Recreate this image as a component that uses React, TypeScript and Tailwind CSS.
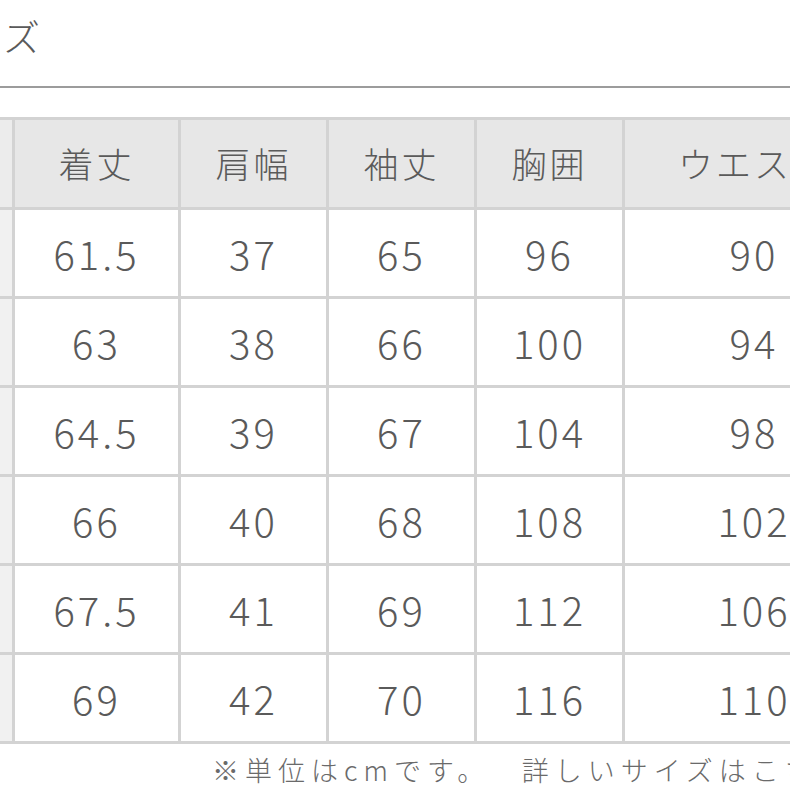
import React from "react";

// ── Data ──────────────────────────────────────────────────────────────────────

const HEADERS = ["サイズ", "着丈", "肩幅", "袖丈", "胸囲", "ウエスト"];

const ROWS: (string | number)[][] = [
  ["S", "61.5", 37, 65, 96, 90],
  ["M", 63, 38, 66, 100, 94],
  ["L", "64.5", 39, 67, 104, 98],
  ["XL", 66, 40, 68, 108, 102],
  ["2XL", "67.5", 41, 69, 112, 106],
  ["3XL", 69, 42, 70, 116, 110],
];

const font = { fontFamily: '"Noto Sans CJK JP", "Noto Sans", sans-serif' };

// ── Page ──────────────────────────────────────────────────────────────────────

export default function App() {
  return (
    <div className="w-[790px] h-[790px] overflow-hidden bg-white text-[#5a5a5a] font-light" style={font}>
      {/* Title (cropped) */}
      <div className="pt-[18px] h-[86px] whitespace-nowrap">
        <span className="block ml-[-74px] text-[37px] leading-[37px] tracking-[2px]">サイズ</span>
      </div>
      <div className="h-[2px] bg-[#9c9c9c]" />

      {/* Size table */}
      <div className="mt-[29px] ml-[-138px] w-max bg-[#d3d3d3] p-[3px] pl-0 grid grid-cols-[150px_163px_145px_145px_145px_258px] gap-[3px]">
        {HEADERS.map((h, i) => (
          <div
            key={h}
            className={`h-[87px] flex items-center justify-center text-[35px] tracking-[3px] ${i === 0 ? "bg-[#ececec]" : "bg-[#e7e7e7]"}`}
          >
            {h}
          </div>
        ))}
        {ROWS.map((row, r) =>
          row.map((v, i) => (
            <div
              key={`${r}-${i}`}
              className={`h-[86px] flex items-center justify-center text-[40px] tracking-[3px] ${i === 0 ? "bg-[#f1f1f1]" : "bg-white"}`}
            >
              {v}
            </div>
          ))
        )}
      </div>

      {/* Note */}
      <div className="mt-[11px] pl-[212px] whitespace-pre text-[27px] leading-[30px] tracking-[6px] text-[#6a6a6a]">
        ※単位はcmです。　 詳しいサイズはこちら
      </div>
    </div>
  );
}
